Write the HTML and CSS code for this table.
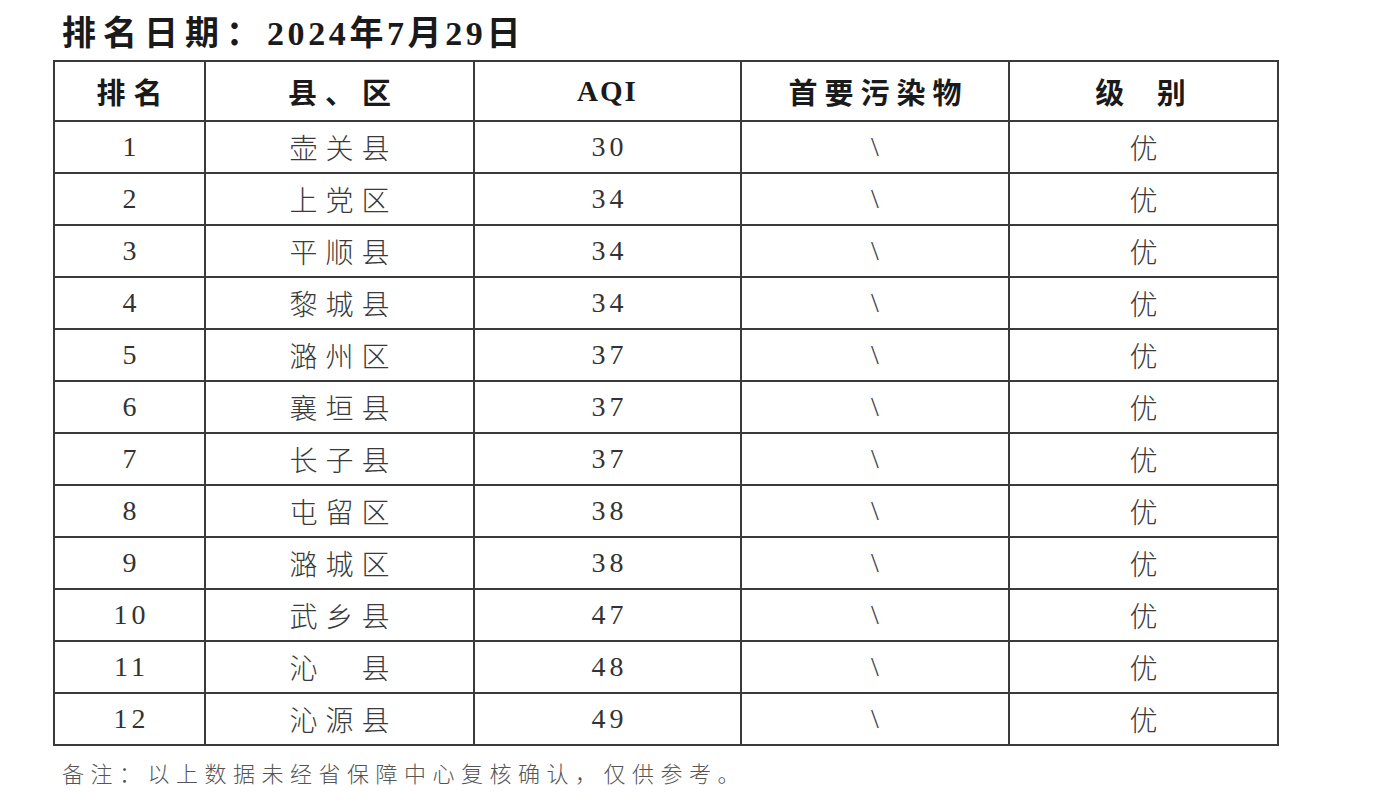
FILE: index.html
```html
<!DOCTYPE html>
<html lang="zh-CN">
<head>
<meta charset="utf-8">
<title>排名</title>
<link rel="stylesheet" href="styles.css">
</head>
<body>
<div class="page">
  <h1 class="title"><span class="title-label">排名日期：</span><span class="title-date">2024年7月29日</span></h1>
  <table class="rank">
    <colgroup>
      <col class="c1"><col class="c2"><col class="c3"><col class="c4"><col class="c5">
    </colgroup>
    <thead>
      <tr><th class="sp8">排名</th><th class="sp8">县、区</th><th class="num-h">AQI</th><th class="sp7">首要污染物</th><th class="sp13">级 别</th></tr>
    </thead>
    <tbody>
      <tr><td class="num">1</td><td class="cn">壶关县</td><td class="num">30</td><td class="sl">\</td><td class="cn">优</td></tr>
      <tr><td class="num">2</td><td class="cn">上党区</td><td class="num">34</td><td class="sl">\</td><td class="cn">优</td></tr>
      <tr><td class="num">3</td><td class="cn">平顺县</td><td class="num">34</td><td class="sl">\</td><td class="cn">优</td></tr>
      <tr><td class="num">4</td><td class="cn">黎城县</td><td class="num">34</td><td class="sl">\</td><td class="cn">优</td></tr>
      <tr><td class="num">5</td><td class="cn">潞州区</td><td class="num">37</td><td class="sl">\</td><td class="cn">优</td></tr>
      <tr><td class="num">6</td><td class="cn">襄垣县</td><td class="num">37</td><td class="sl">\</td><td class="cn">优</td></tr>
      <tr><td class="num">7</td><td class="cn">长子县</td><td class="num">37</td><td class="sl">\</td><td class="cn">优</td></tr>
      <tr><td class="num">8</td><td class="cn">屯留区</td><td class="num">38</td><td class="sl">\</td><td class="cn">优</td></tr>
      <tr><td class="num">9</td><td class="cn">潞城区</td><td class="num">38</td><td class="sl">\</td><td class="cn">优</td></tr>
      <tr><td class="num">10</td><td class="cn">武乡县</td><td class="num">47</td><td class="sl">\</td><td class="cn">优</td></tr>
      <tr><td class="num">11</td><td class="cn">沁&emsp;县</td><td class="num">48</td><td class="sl">\</td><td class="cn">优</td></tr>
      <tr><td class="num">12</td><td class="cn">沁源县</td><td class="num">49</td><td class="sl">\</td><td class="cn">优</td></tr>
    </tbody>
  </table>
  <p class="note">备注：以上数据未经省保障中心复核确认，仅供参考。</p>
</div>
</body>
</html>
```
FILE: styles.css
```css
html, body {
  margin: 0;
  padding: 0;
  background: #ffffff;
}
body {
  font-family: "Liberation Serif", "Noto Sans CJK SC", serif;
  color: #333;
}
.page {
  padding: 0 0 0 53px;
}
.title {
  margin: 0;
  height: 60px;
  padding: 0 0 0 9px;
  box-sizing: border-box;
  font-size: 34px;
  line-height: 62px;
  font-weight: bold;
  color: #1a1a1a;
  white-space: nowrap;
}
.title-label {
  font-family: "Noto Sans CJK SC", sans-serif;
  letter-spacing: 7px;
}
.title-date {
  font-family: "Liberation Serif", "Noto Sans CJK SC", serif;
  letter-spacing: 3.6px;
}
.rank {
  border-collapse: collapse;
  table-layout: fixed;
  width: 1226px;
  border: 2px solid #3a3a3a;
}
.c1 { width: 151px; }
.c2 { width: 269px; }
.c3 { width: 267px; }
.c4 { width: 268px; }
.c5 { width: 269px; }
.rank th, .rank td {
  border: 2px solid #3a3a3a;
  text-align: center;
  padding: 0;
  white-space: nowrap;
}
.rank th {
  height: 58px;
  font-family: "Noto Sans CJK SC", sans-serif;
  font-size: 29px;
  font-weight: bold;
  color: #1a1a1a;
}
.rank td {
  height: 50px;
  font-size: 28px;
}
.sp8 { letter-spacing: 8px; text-indent: 8px; }
.sp7 { letter-spacing: 7px; text-indent: 7px; }
.sp13 { letter-spacing: 13px; text-indent: 7px; }
.num-h {
  font-family: "Liberation Serif", serif !important;
  letter-spacing: 2px;
}
.num {
  font-family: "Liberation Serif", serif;
  font-size: 30px;
  letter-spacing: 4px;
  text-indent: 4px;
  color: #333;
}
.cn {
  font-family: "Noto Sans CJK SC", sans-serif;
  font-weight: 300;
  letter-spacing: 8px;
  text-indent: 8px;
  color: #3a3a3a;
}
.sl {
  font-family: "Liberation Serif", serif;
  font-size: 28px;
  color: #444;
}
.note {
  margin: 10px 0 0 9px;
  font-family: "Noto Sans CJK SC", sans-serif;
  font-weight: 300;
  font-size: 22px;
  letter-spacing: 6.5px;
  color: #555;
}
```
